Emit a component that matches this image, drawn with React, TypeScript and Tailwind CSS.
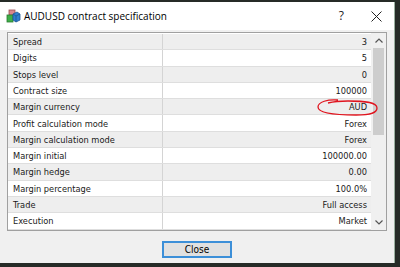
const rows: [string, string][] = [
  ["Spread", "3"],
  ["Digits", "5"],
  ["Stops level", "0"],
  ["Contract size", "100000"],
  ["Margin currency", "AUD"],
  ["Profit calculation mode", "Forex"],
  ["Margin calculation mode", "Forex"],
  ["Margin initial", "100000.00"],
  ["Margin hedge", "0.00"],
  ["Margin percentage", "100.0%"],
  ["Trade", "Full access"],
  ["Execution", "Market"],
];

const SymbolIcon = () => (
  <svg width="15" height="15" viewBox="0 0 15 15">
    <rect x="3" y="1" width="6" height="5" fill="#d9868c" stroke="#9a4b52" strokeWidth="0.8" />
    <rect x="1" y="6" width="6" height="7" fill="#3fae49" stroke="#2a7a31" strokeWidth="0.8" />
    <path d="M7 5 L11 3 L14 5 L14 11 L10 13 L7 11 Z" fill="#2f7fd0" stroke="#1d5594" strokeWidth="0.8" />
    <path d="M7 5 L10 7 L14 5 M10 7 L10 13" fill="none" stroke="#1d5594" strokeWidth="0.8" />
  </svg>
);

export default function App() {
  return (
    <div className="w-[400px] h-[267px] bg-[#262b27] overflow-hidden pt-[2px] pr-[5px]">
      <div className="w-[395px] h-[261px] bg-[#f0f0f0] border-r border-[#9ab0a0] flex flex-col">
        {/* title bar */}
        <div className="h-[28px] bg-white flex items-center pl-[6px] pr-[12px] shrink-0">
          <SymbolIcon />
          <span className="ml-[3px] text-[10px] text-black" style={{ fontFamily: '"Open Sans", "Noto Sans", sans-serif' }}>
            AUDUSD contract specification
          </span>
          <span className="ml-auto text-[12px] text-[#222]" style={{ fontFamily: '"Open Sans", sans-serif' }}>?</span>
          <svg className="ml-[27px]" width="11" height="11" viewBox="0 0 11 11">
            <path d="M0.5 0.5 L10.5 10.5 M10.5 0.5 L0.5 10.5" stroke="#222" strokeWidth="1" />
          </svg>
        </div>

        <div className="px-[7px] pt-[2px]" style={{ fontFamily: '"DejaVu Sans Condensed", "Liberation Sans", Tahoma, sans-serif' }}>
          <div className="relative flex border border-[#a0a0a0] bg-white h-[199px]">
            <div className="flex-1 pt-[1px]">
              {rows.map(([name, value], i) => (
                <div
                  key={name}
                  className={`flex h-[16.3px] items-center text-[9.2px] leading-none text-[#1a1a1a] border-b border-[#dedede] ${
                    i % 2 === 0 ? "bg-[#eeeeee]" : "bg-white"
                  }`}
                >
                  <div className="w-[155px] pl-[5px] h-full flex items-center border-r border-[#d4d4d4]">{name}</div>
                  <div className="flex-1 pr-[4px] text-right">{value}</div>
                </div>
              ))}
            </div>
            {/* scrollbar */}
            <div className="w-[15px] bg-[#f0f0f0] flex flex-col items-center">
              <div className="h-[15px] flex items-center justify-center">
                <svg width="8" height="5" viewBox="0 0 8 5">
                  <path d="M0.5 4.5 L4 1 L7.5 4.5" fill="none" stroke="#555" strokeWidth="1.2" />
                </svg>
              </div>
              <div className="w-[11px] h-[87px] bg-[#cdcdcd]" />
              <div className="flex-1" />
              <div className="h-[15px] flex items-center justify-center">
                <svg width="8" height="5" viewBox="0 0 8 5">
                  <path d="M0.5 0.5 L4 4 L7.5 0.5" fill="none" stroke="#555" strokeWidth="1.2" />
                </svg>
              </div>
            </div>
            {/* red hand-drawn mark */}
            <svg className="absolute left-[308px] top-[65px]" width="64" height="20" viewBox="0 0 64 20">
              <path
                d="M22 2 C12 1 2 4 2 9 C2 15 20 17 40 17 C55 17 61 15 61 10 C61 4 48 3 32 3 C22 3 16 4 12 5"
                fill="none"
                stroke="#e0141e"
                strokeWidth="1.3"
              />
            </svg>
          </div>

          <div className="flex justify-center mt-[10px]">
            <button className="w-[70px] h-[17px] bg-[#e1e1e1] border-2 border-[#3c8fd8] text-[10px] text-black leading-none">
              Close
            </button>
          </div>
        </div>
      </div>
    </div>
  );
}
